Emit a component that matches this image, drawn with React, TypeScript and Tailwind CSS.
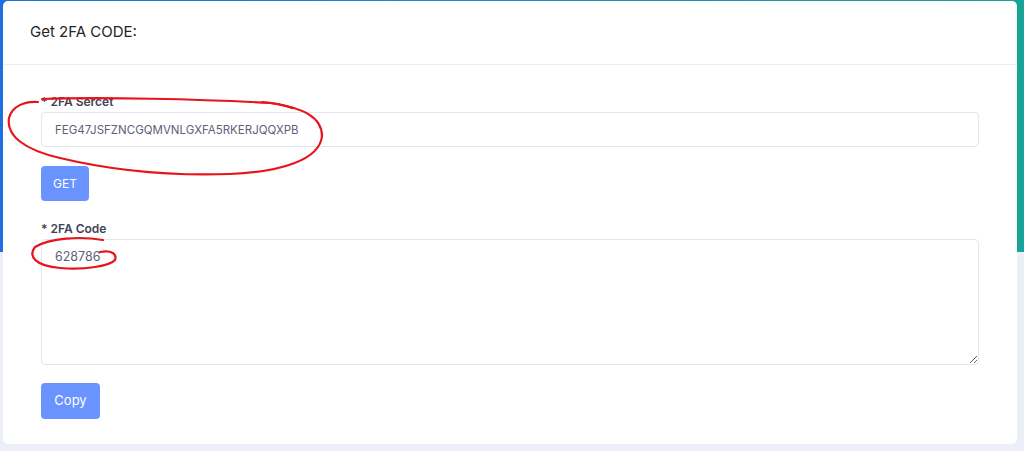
import { useState } from "react";

// 2FA code helper card: secret input + GET, resulting code + Copy.
export default function App() {
  const [secret, setSecret] = useState("FEG47JSFZNCGQMVNLGXFA5RKERJQQXPB");
  const [code, setCode] = useState("628786");

  return (
    <div
      className="relative min-h-[451px] w-full overflow-hidden bg-[#eceef8] text-[#3b4252]"
      style={{ fontFamily: "Inter, 'Open Sans', sans-serif" }}
    >
      {/* page header band behind the card */}
      <div
        className="absolute inset-x-0 top-0 h-[252px] bg-gradient-to-r from-[#1f6fe0] via-[#1c8ebd] to-[#17a397]"
        aria-hidden
      />

      <div className="relative ml-[3px] mr-[7px] mt-px h-[443px] rounded-[5px] bg-white">
        <div className="flex h-[64px] items-center border-b border-[#ebedf3] px-[27px]">
          <h3 className="text-[15px] font-normal text-[#212529]">Get 2FA CODE:</h3>
        </div>

        <div className="px-[38px] pt-[29px]">
          <label className="block text-[12px] font-semibold leading-[16px] text-[#3f4254]">
            * 2FA Sercet
          </label>
          <input
            value={secret}
            onChange={(e) => setSecret(e.target.value)}
            className="mt-[2px] block h-[35px] w-[938px] rounded-[4px] border border-[#e4e6ef] px-[13px] text-[11.5px] text-[#5e6278] outline-none"
          />
          <button className="mt-[19px] h-[35px] w-[48px] rounded-[4px] bg-[#6993ff] text-[12px] text-white">
            GET
          </button>

          <label className="mt-[20px] block text-[12px] font-semibold leading-[16px] text-[#3f4254]">
            * 2FA Code
          </label>
          <textarea
            value={code}
            onChange={(e) => setCode(e.target.value)}
            className="mt-[2px] block h-[126px] w-[938px] rounded-[4px] border border-[#e4e6ef] px-[13px] py-[8px] text-[12.5px] text-[#5e6278] outline-none"
          />
          <button className="mt-[18px] h-[36px] w-[59px] rounded-[4px] bg-[#6993ff] text-[13px] text-white">
            Copy
          </button>
        </div>
      </div>

      <Scribbles />
    </div>
  );
}

// Red hand-drawn marks over the screenshot.
function Scribbles() {
  return (
    <svg
      className="pointer-events-none absolute left-0 top-0"
      width="1024"
      height="451"
      aria-hidden
      fill="none"
      stroke="#e8141b"
      strokeWidth="2.2"
      strokeLinecap="round"
    >
      <path d="M42 99 C 100 97, 200 99, 270 103 C 305 108, 322 118, 322 136 C 320 160, 280 172, 230 174 C 170 176, 110 170, 60 158 C 25 150, 6 136, 9 118 C 12 106, 25 101, 38 102" />
      <path d="M262 102 C 275 103, 285 105, 292 108" />
      <path d="M103 240 C 80 236, 50 238, 35 247 C 28 256, 35 266, 60 268 C 85 270, 110 266, 115 260 C 117 254, 112 250, 100 252" />
    </svg>
  );
}
